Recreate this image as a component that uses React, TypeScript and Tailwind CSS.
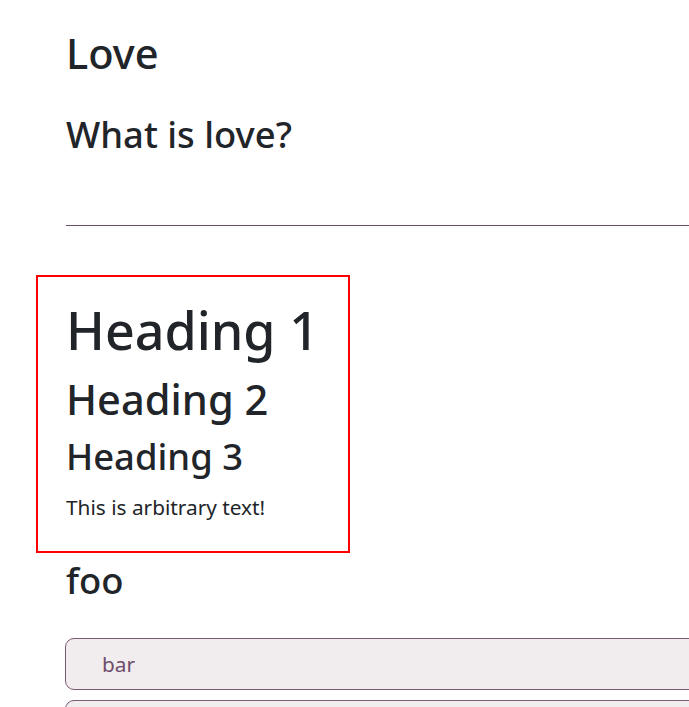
export default function App() {
  return (
    <div
      className="w-[689px] h-[707px] overflow-hidden bg-white text-[#212529]"
      style={{ fontFamily: '"Noto Sans", sans-serif' }}
    >
      <div className="w-[760px] pl-[36px] pt-[29px]">
        <h2 className="ml-[30px] text-[41.6px] leading-[1.2] font-medium">Love</h2>
        <h3 className="ml-[30px] mt-[34px] text-[36.4px] leading-[1.2] font-medium">What is love?</h3>
        <hr className="ml-[30px] mt-[68px] border-0 border-t border-[#6b4f67]" />
        <div className="mt-[49px] w-[314px] border-[2.5px] border-[#ff0000] pl-[28px] pt-[22px] pb-[28px]">
          <h1 className="text-[52px] leading-[1.2] font-medium">Heading 1</h1>
          <h2 className="mt-[14px] text-[41.6px] leading-[1.2] font-medium">Heading 2</h2>
          <h3 className="mt-[10px] text-[36.4px] leading-[1.2] font-medium">Heading 3</h3>
          <p className="mt-[13px] text-[20.8px] leading-[1.5]">This is arbitrary text!</p>
        </div>
        <h3 className="ml-[30px] mt-[6px] text-[36.4px] leading-[1.2] font-medium">foo</h3>
        <div className="ml-[29px] mt-[36px] flex flex-col gap-[10px]">
          <div className="h-[52px] rounded-[9px] border border-[#7a5a75] bg-[#f1ecee] pl-[36px] flex items-center text-[20.8px] text-[#6f4e6b]">
            bar
          </div>
          <div className="h-[52px] rounded-[9px] border border-[#7a5a75] bg-[#f1ecee]" />
        </div>
      </div>
    </div>
  );
}
